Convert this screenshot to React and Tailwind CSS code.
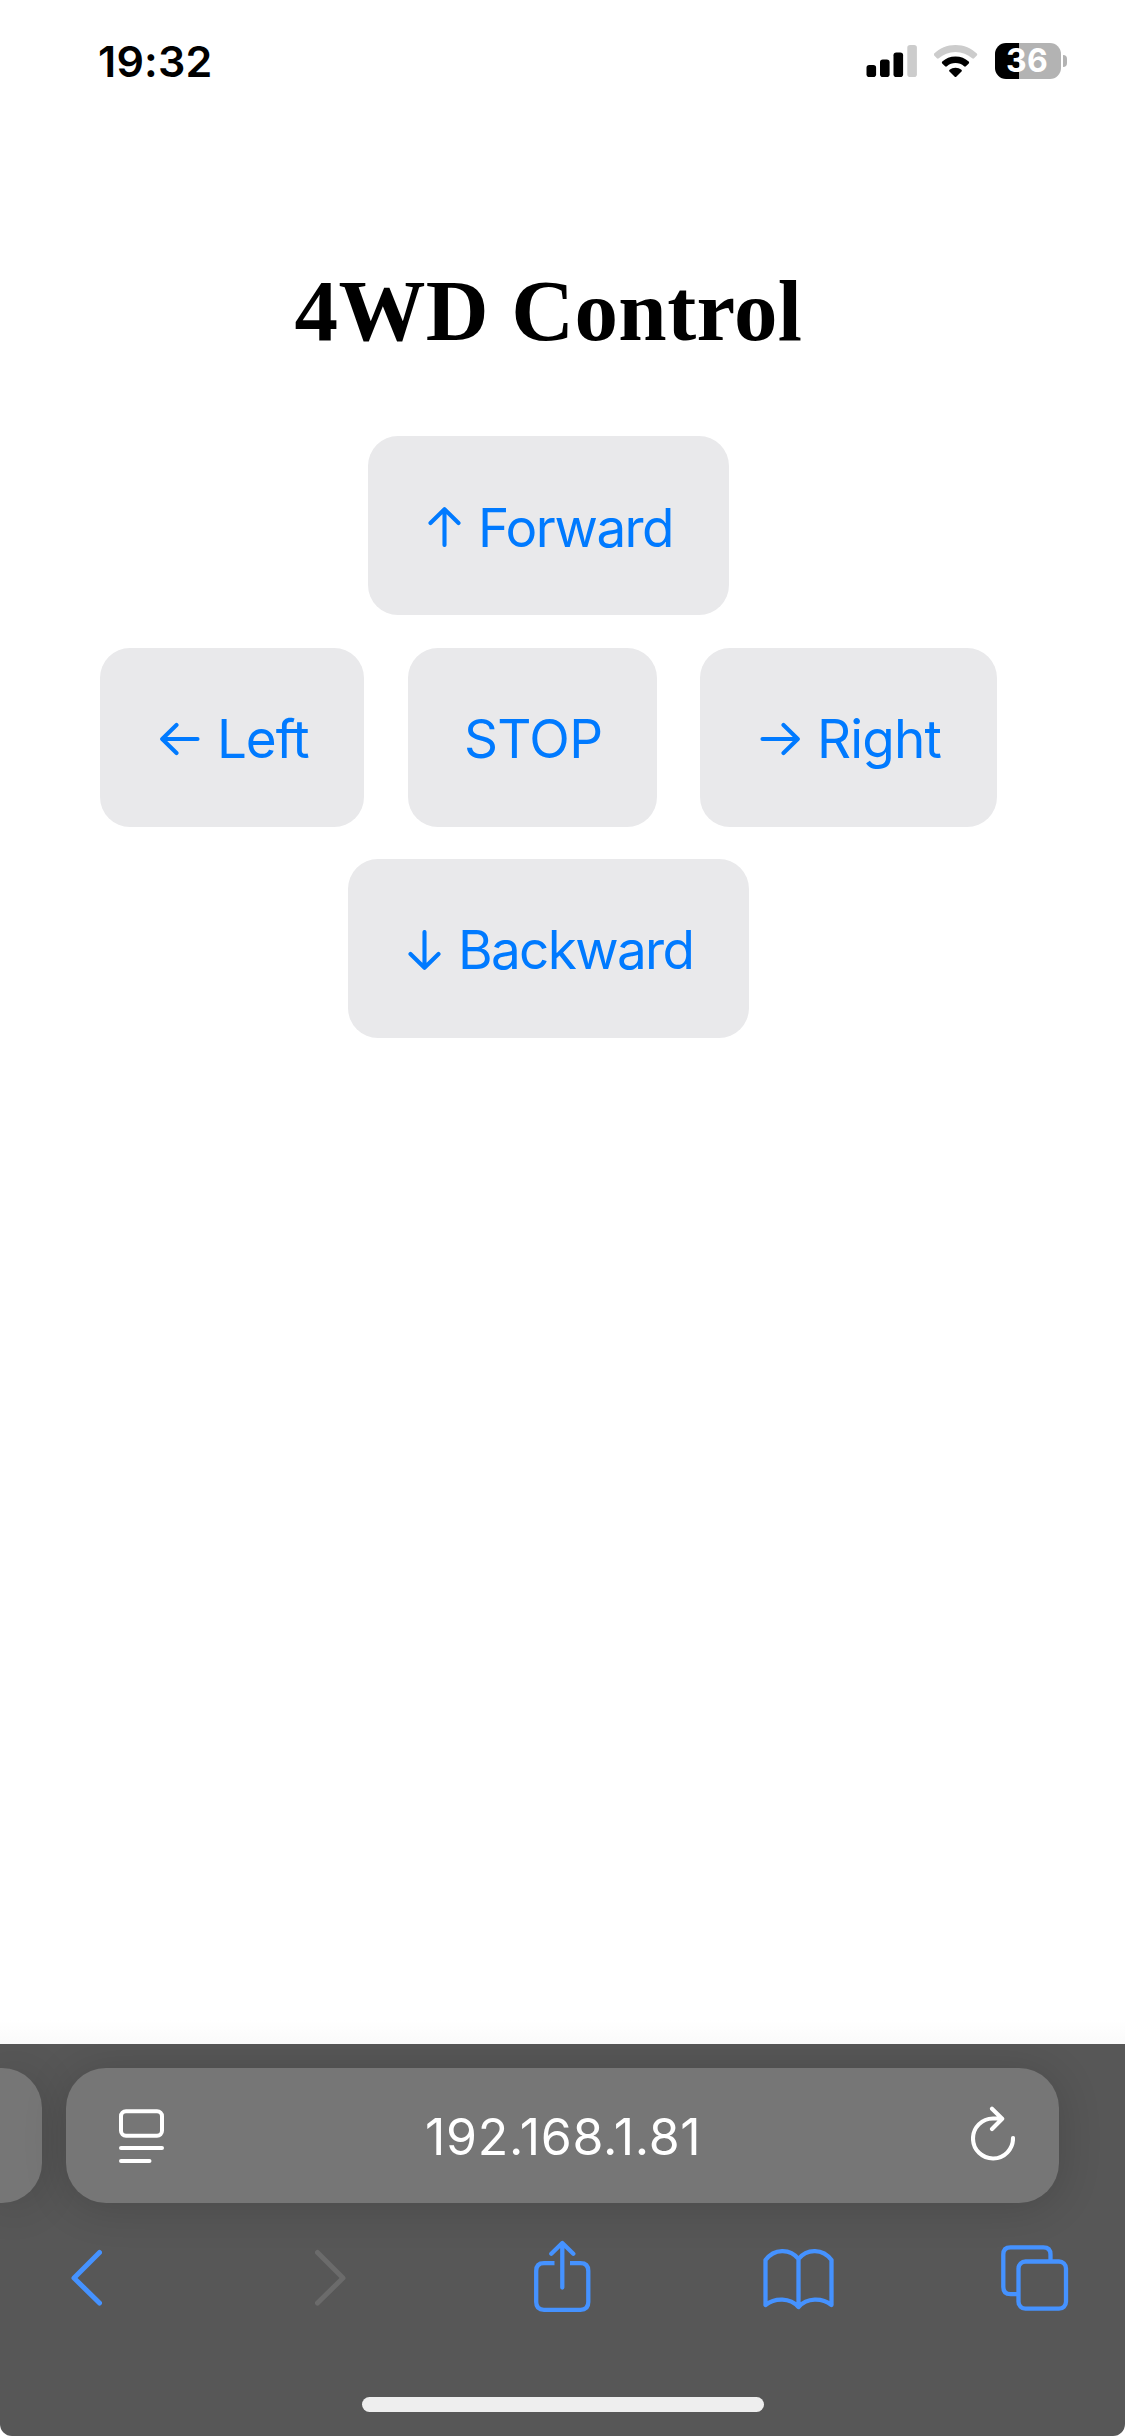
const ARROWS = {
  up: { w: 33, d: "M16.5 38V3M2.5 16L16.5 2.2L30.5 16" },
  down: { w: 33, d: "M16.5 2V37M2.5 24L16.5 37.8L30.5 24" },
  left: { w: 40, d: "M37.5 20H3M16.5 6L2.2 20L16.5 34" },
  right: { w: 40, d: "M2.5 20H37M23.5 6L37.8 20L23.5 34" },
};

function Arrow({ dir, className = "" }) {
  const { w, d } = ARROWS[dir];
  return (
    <svg className={`shrink-0 ${className}`} width={w} height="40" viewBox={`0 0 ${w} 40`} fill="none" stroke="currentColor" strokeWidth="4.1" strokeLinecap="round" strokeLinejoin="round">
      <path d={d} />
    </svg>
  );
}

function ControlButton({ className, children }) {
  return (
    <button className={`flex h-[179px] items-center rounded-[30px] bg-[#e9e9eb] text-[53px] leading-[60px] whitespace-nowrap text-[#007aff] ${className}`}>
      {children}
    </button>
  );
}

function StatusBar() {
  return (
    <header className="flex h-[122px] items-center pl-[98px]">
      <span className="w-[116px] text-[43px] leading-none font-semibold tracking-[0.2px]">19:32</span>
      <svg className="ml-[652px]" width="51" height="33" viewBox="0 0 51 33">
        <rect x="0.5" y="20" width="9.6" height="12" rx="2.8" />
        <rect x="14" y="14.5" width="9.6" height="17.5" rx="2.8" />
        <rect x="27.5" y="7.5" width="9.6" height="24.5" rx="2.8" />
        <rect x="41.3" y="0" width="9.6" height="32" rx="2.8" fill="#cccccc" />
      </svg>
      <svg className="ml-[17px]" width="44" height="33" viewBox="0 0 44 33">
        <path fill="#cccccc" d="M21.5 0C30 0 37.5 3.3 42.8 8.6c.6.6.6 1.3 0 1.9l-2.7 2.8c-.6.6-1.3.6-1.9 0C33.7 9.3 28 7 21.5 7S9.3 9.3 4.8 13.3c-.6.6-1.3.6-1.9 0L.2 10.5c-.6-.6-.6-1.3 0-1.9C5.5 3.3 13 0 21.5 0Z" />
        <path d="M21.5 11.5c5.3 0 9.800 1.9 13.2 5.1.6.6.6 1.2.1 1.8l-2.9 2.9c-.6.5-1.2.5-1.8 0-2.4-2-5.3-3.2-8.6-3.2s-6.2 1.2-8.6 3.2c-.6.5-1.2.5-1.8 0l-2.9-2.9c-.5-.6-.5-1.2.1-1.8 3.4-3.2 7.9-5.1 13.2-5.1Z" />
        <path d="M21.5 22.8c2.3 0 4.3.8 5.9 2 .6.5.6 1.1.1 1.6l-5 5c-.7.7-1.3.7-2 0l-5-5c-.5-.5-.5-1.1.1-1.6 1.6-1.2 3.6-2 5.9-2Z" />
      </svg>
      <div className="ml-[17px] flex h-9 w-[66px] items-center justify-center rounded-[11px] bg-[linear-gradient(to_right,#000_24px,#b3b3b3_24px)] pr-0.5 text-[32px] leading-none font-bold tracking-[0.3px] text-white">
        36
      </div>
      <div className="ml-[2px] h-3 w-1 rounded-r-full bg-[#b3b3b3]" />
    </header>
  );
}

function AddressBar() {
  return (
    <div className="flex h-[135px] gap-6">
      <div className="w-[42px] rounded-r-[40px] bg-[#767676] shadow-[0_4px_44px_rgba(0,0,0,0.16)]" />
      <div className="flex w-[993px] items-center rounded-[40px] bg-[#767676] pl-[53px] text-white shadow-[0_4px_44px_rgba(0,0,0,0.16)]">
        <svg className="mt-[2px]" width="45" height="55" viewBox="0 0 45 55" fill="none" stroke="currentColor" strokeWidth="4" strokeLinecap="round">
          <rect x="2" y="2.3" width="41" height="24.400" rx="5" />
          <path d="M2 39H43M2 52H30.500" />
        </svg>
        <span className="mt-[2px] ml-[261px] w-[272px] text-[50px] leading-[60px] tracking-[0.69px]">192.168.1.81</span>
        <svg className="mb-1 ml-[274px]" width="44" height="55" viewBox="0 0 44 55" fill="none" stroke="currentColor" strokeWidth="4.100" strokeLinecap="round" strokeLinejoin="round">
          <path d="M42 32A20 20 0 1 1 22 12.500H31M21 2.700L31.200 12.700L21 23" />
        </svg>
      </div>
    </div>
  );
}

function NavIcon({ w, d, className, strokeWidth = 4.3 }) {
  return (
    <svg className={className} width={w} height="74" viewBox={`0 0 ${w} 74`} fill="none" stroke="currentColor" strokeWidth={strokeWidth} strokeLinecap="round" strokeLinejoin="round">
      {d}
    </svg>
  );
}

function Toolbar() {
  return (
    <nav className="mt-9 flex h-[74px] text-[#4592ff]">
      <NavIcon w={31} strokeWidth={5} className="ml-[71px]" d={<path d="M28.5 13.5L3 39L28.5 64" />} />
      <NavIcon w={31} strokeWidth={5} className="ml-[213px] text-[#6b6b6b]" d={<path d="M2.5 13.5L28 39L2.5 64" />} />
      <NavIcon
        w={57}
        className="ml-[188px]"
        d={
          <>
            <path strokeLinecap="butt" d="M20.5 24.2H10Q2.2 24.2 2.2 32V63Q2.2 70.8 10 70.8H46.5Q54.3 70.8 54.3 63V32Q54.3 24.2 46.5 24.2H36" />
            <path d="M28.3 48.5V4.5M17.3 14.7L28.3 4L39.3 14.7" />
          </>
        }
      />
      <NavIcon
        w={71}
        className="ml-[172px]"
        d={<path d="M35.5 20V68C27 58.5 12 58.5 2.5 66V21C11 9.5 27 9 35.5 20C44 9 60 9.5 68.5 21V66C59 58.5 44 58.5 35.5 68" />}
      />
      <NavIcon
        w={68}
        className="ml-[167px]"
        d={
          <>
            <rect x="17.5" y="22.5" width="47.5" height="47.2" rx="7" />
            <path strokeLinecap="butt" d="M49.5 21V15.5Q49.5 8.3 42.3 8.3H9.5Q2.3 8.3 2.3 15.5V48Q2.3 55.2 9.5 55.2H16" />
          </>
        }
      />
    </nav>
  );
}

export default function App() {
  return (
    <div className="flex h-[2436px] w-[1125px] flex-col overflow-hidden bg-white font-[Inter,sans-serif] text-black">
      <StatusBar />
      <main className="flex w-[1097px] flex-1 flex-col items-center">
        <h1 className="mt-[139px] font-['Liberation_Serif',serif] text-[87px] leading-[100px] font-bold tracking-[0.4px]">4WD Control</h1>
        <ControlButton className="mt-[75px] w-[361px] pl-[60px]">
          <Arrow dir="up" className="mt-[3px]" />
          <span className="mt-1 ml-[17px] tracking-[-1.59px]">Forward</span>
        </ControlButton>
        <div className="mt-[33px] flex">
          <ControlButton className="w-[264px] pl-[60px]">
            <Arrow dir="left" className="mt-[2px]" />
            <span className="mt-[2px] ml-[17px] tracking-[-1.1px]">Left</span>
          </ControlButton>
          <ControlButton className="ml-[44px] w-[249px] pl-[56px]">
            <span className="mt-[2px] tracking-[-0.65px]">STOP</span>
          </ControlButton>
          <ControlButton className="ml-[43px] w-[297px] pl-[60px]">
            <Arrow dir="right" className="mt-[2px]" />
            <span className="mt-[2px] ml-[17px] tracking-[-0.85px]">Right</span>
          </ControlButton>
        </div>
        <ControlButton className="mt-8 w-[401px] pl-[60px]">
          <Arrow dir="down" className="mt-[2px]" />
          <span className="mt-[2px] ml-[17px] tracking-[-1.66px]">Backward</span>
        </ControlButton>
      </main>
      <div className="h-6 bg-linear-to-b from-white to-[#fafafa]" />
      <footer className="h-[392px] overflow-hidden rounded-b-[12px] bg-[#575757] pt-6">
        <AddressBar />
        <Toolbar />
        <div className="mx-auto mt-[84px] h-[15px] w-[402px] rounded-full bg-[#eeeeee]" />
      </footer>
    </div>
  );
}
